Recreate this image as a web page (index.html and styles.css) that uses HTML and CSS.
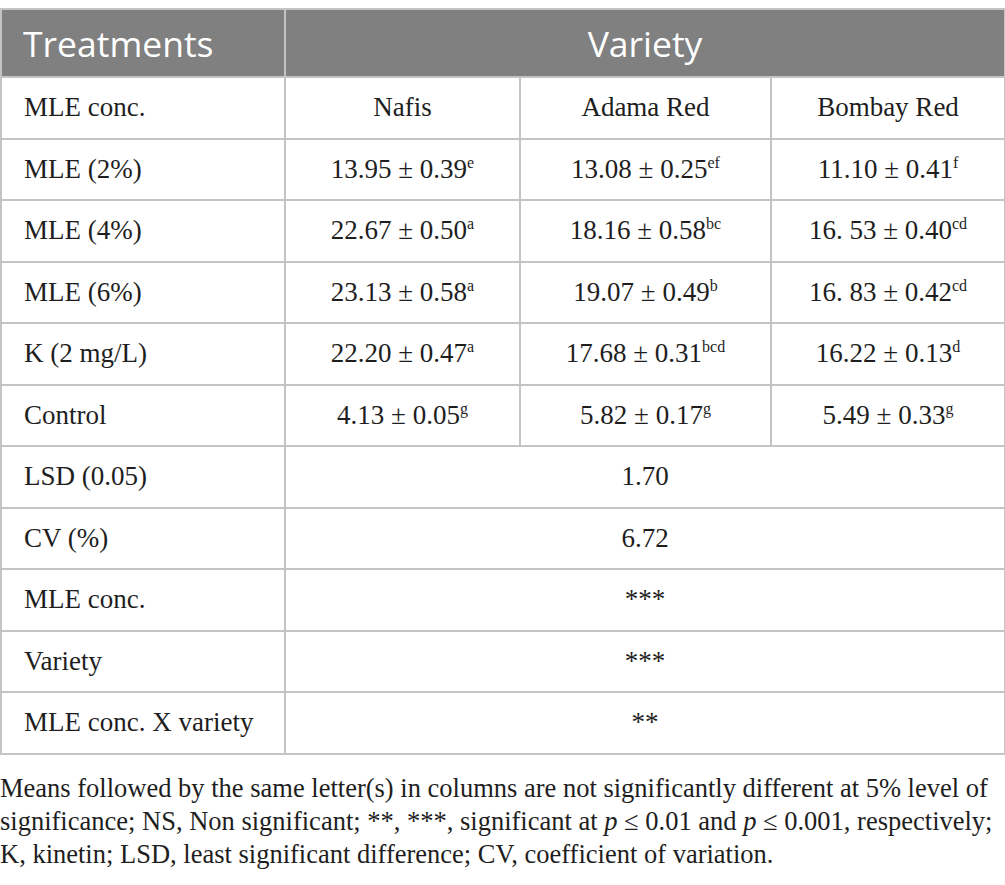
FILE: index.html
```html
<!DOCTYPE html>
<html>
<head>
  <title>Table</title>
  <meta charset="UTF-8" />
  <link rel="stylesheet" href="styles.css">
</head>
<body>
  <table class="data-table">
    <colgroup>
      <col class="col-treat">
      <col class="col-nafis">
      <col class="col-adama">
      <col class="col-bombay">
    </colgroup>
    <thead>
      <tr>
        <th class="head-left">Treatments</th>
        <th colspan="3">Variety</th>
      </tr>
    </thead>
    <tbody>
      <tr>
        <td>MLE conc.</td>
        <td class="num">Nafis</td>
        <td class="num">Adama Red</td>
        <td class="num">Bombay Red</td>
      </tr>
      <tr>
        <td>MLE (2%)</td>
        <td class="num">13.95 ± 0.39<sup>e</sup></td>
        <td class="num">13.08 ± 0.25<sup>ef</sup></td>
        <td class="num">11.10 ± 0.41<sup>f</sup></td>
      </tr>
      <tr>
        <td>MLE (4%)</td>
        <td class="num">22.67 ± 0.50<sup>a</sup></td>
        <td class="num">18.16 ± 0.58<sup>bc</sup></td>
        <td class="num">16. 53 ± 0.40<sup>cd</sup></td>
      </tr>
      <tr>
        <td>MLE (6%)</td>
        <td class="num">23.13 ± 0.58<sup>a</sup></td>
        <td class="num">19.07 ± 0.49<sup>b</sup></td>
        <td class="num">16. 83 ± 0.42<sup>cd</sup></td>
      </tr>
      <tr>
        <td>K (2 mg/L)</td>
        <td class="num">22.20 ± 0.47<sup>a</sup></td>
        <td class="num">17.68 ± 0.31<sup>bcd</sup></td>
        <td class="num">16.22 ± 0.13<sup>d</sup></td>
      </tr>
      <tr>
        <td>Control</td>
        <td class="num">4.13 ± 0.05<sup>g</sup></td>
        <td class="num">5.82 ± 0.17<sup>g</sup></td>
        <td class="num">5.49 ± 0.33<sup>g</sup></td>
      </tr>
      <tr>
        <td>LSD (0.05)</td>
        <td class="num" colspan="3">1.70</td>
      </tr>
      <tr>
        <td>CV (%)</td>
        <td class="num" colspan="3">6.72</td>
      </tr>
      <tr>
        <td>MLE conc.</td>
        <td class="num" colspan="3">***</td>
      </tr>
      <tr>
        <td>Variety</td>
        <td class="num" colspan="3">***</td>
      </tr>
      <tr>
        <td>MLE conc. X variety</td>
        <td class="num" colspan="3">**</td>
      </tr>
    </tbody>
  </table>

  <p class="footnote">
    Means followed by the same letter(s) in columns are not significantly different at 5% level of<br>
    significance; NS, Non significant; **, ***, significant at <i>p</i> ≤ 0.01 and <i>p</i> ≤ 0.001, respectively;<br>
    K, kinetin; LSD, least significant difference; CV, coefficient of variation.
  </p>
</body>
</html>
```

FILE: styles.css
```css
body {
  margin: 0;
  padding: 8px 0 0 0;
  background: #ffffff;
  color: #1e1e1e;
  font-family: "Liberation Serif", "Times New Roman", serif;
}

/* Table */
.data-table {
  width: 1004px;
  border-collapse: collapse;
  table-layout: fixed;
}

.col-treat { width: 284px; }
.col-nafis { width: 235px; }
.col-adama { width: 251px; }
.col-bombay { width: 234px; }

.data-table th {
  background-color: #808080;
  color: #ffffff;
  font-family: "Open Sans", "Noto Sans", sans-serif;
  font-weight: 400;
  font-size: 35.5px;
  height: 66px;
  padding: 0;
  text-align: center;
  border: 2px solid #c4c4c4;
}

.data-table th.head-left {
  text-align: left;
  padding-left: 21px;
}

.data-table td {
  font-family: "Liberation Serif", "Times New Roman", serif;
  font-size: 27px;
  height: 59.5px;
  padding: 0 0 0 22px;
  border: 2px solid #c4c4c4;
  vertical-align: middle;
}

.data-table td.num {
  text-align: center;
  padding: 0;
}

.data-table sup {
  font-size: 16px;
  vertical-align: 10px;
  line-height: 0;
}

/* Footnote */
.footnote {
  margin: 17px 0 0 0;
  font-size: 26.5px;
  line-height: 33px;
  white-space: nowrap;
  color: #1e1e1e;
}
```
